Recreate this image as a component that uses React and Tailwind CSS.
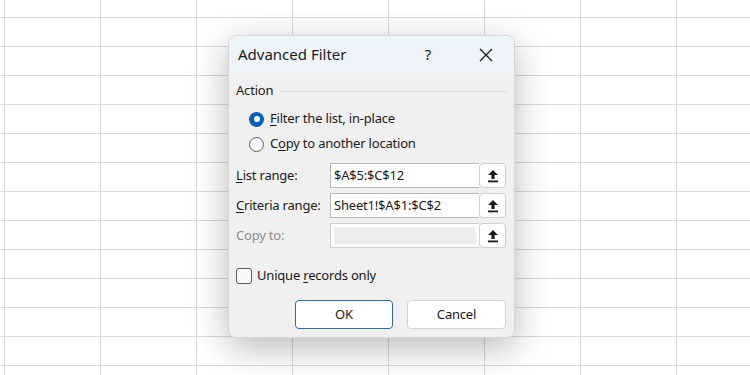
import React from "react";

const font = { fontFamily: '"Noto Sans", "Open Sans", sans-serif' };

function GridBackground() {
  const cols = 8;
  const rows = 13;
  const cells = [];
  for (let r = 0; r < rows + 1; r++) {
    for (let c = 0; c < cols + 1; c++) {
      cells.push(<div key={r + "-" + c} className="border-r border-b border-[#dadada]" />);
    }
  }
  return (
    <div className="grid grid-cols-[5px_repeat(8,96px)] grid-rows-[18px_repeat(13,29px)] w-[750px] h-[375px] overflow-hidden">
      {cells}
    </div>
  );
}

function UploadButton() {
  return (
    <div className="w-[27px] h-[25px] bg-white border border-[#cfcfcf] rounded-[4px] flex items-center justify-center">
      <svg width="12" height="14" viewBox="0 0 12 14">
        <path d="M6 1 L11 6 L7.6 6 L7.6 10 L4.4 10 L4.4 6 L1 6 Z" fill="#1a1a1a" />
        <rect x="1" y="11.5" width="10" height="1.8" fill="#1a1a1a" />
      </svg>
    </div>
  );
}

function RangeRow({ label, value, disabled }) {
  return (
    <div className="flex items-center h-[25px]">
      <div className={"w-[96px] " + (disabled ? "text-[#8c8c8c]" : "text-[#1b1b1b]")}>{label}</div>
      <div className="flex">
        {disabled ? (
          <div className="w-[149px] h-[25px] border border-[#cfcfcf] bg-white p-[3px] border-r-0">
            <div className="w-full h-full bg-[#ececec]" />
          </div>
        ) : (
          <div className="w-[149px] h-[25px] border border-[#b9b9b9] bg-white px-[3px] flex items-center text-[#1b1b1b] border-r-0">
            {value}
          </div>
        )}
        <UploadButton />
      </div>
    </div>
  );
}

export default function App() {
  return (
    <div className="relative w-[750px] h-[375px] bg-white overflow-hidden" style={font}>
      <GridBackground />
      <div className="absolute left-[228px] top-[35px] w-[287px] h-[303px] rounded-[8px] bg-[#f0f0f0] border border-[#d6d6d6] shadow-[0_10px_36px_rgba(0,0,0,0.28)] overflow-hidden flex flex-col text-[13px] tracking-[-0.2px]">
        <div className="h-[37px] bg-[#eef4f9] flex items-center pl-[9px] pr-[12px] shrink-0 tracking-normal">
          <div className="flex-1 text-[15px] text-[#1a1a1a]">Advanced Filter</div>
          <div className="w-[20px] text-center text-[15px] text-[#1a1a1a] mr-[41px]">?</div>
          <svg width="14" height="14" viewBox="0 0 14 14" className="mr-[9px]">
            <path d="M1 1 L13 13 M13 1 L1 13" stroke="#1a1a1a" strokeWidth="1.3" />
          </svg>
        </div>
        <div className="flex flex-col pl-[7px] pr-[8px]">
          <div className="flex items-center mt-[9px] h-[18px]">
            <span className="text-[#1b1b1b]">Action</span>
            <div className="flex-1 ml-[8px] h-px bg-[#d7d7d7]" />
          </div>
          <div className="flex flex-col pl-[13px] mt-[10px] gap-[7px]">
            <div className="flex items-center h-[18px] gap-[6px]">
              <div className="w-[15px] h-[15px] rounded-full bg-[#005fb8] flex items-center justify-center">
                <div className="w-[6px] h-[6px] rounded-full bg-white" />
              </div>
              <span className="text-[#1b1b1b]"><span className="underline underline-offset-2">F</span>ilter the list, in-place</span>
            </div>
            <div className="flex items-center h-[18px] gap-[6px]">
              <div className="w-[15px] h-[15px] rounded-full border border-[#5f5f5f] bg-[#f7f7f7]" />
              <span className="text-[#1b1b1b]">C<span className="underline underline-offset-2">o</span>py to another location</span>
            </div>
          </div>
          <div className="flex flex-col mt-[10px] gap-[5px]">
            <RangeRow label={<><span className="underline underline-offset-2">L</span>ist range:</>} value="$A$5:$C$12" />
            <RangeRow label={<><span className="underline underline-offset-2">C</span>riteria range:</>} value="Sheet1!$A$1:$C$2" />
            <RangeRow label="Copy to:" disabled />
          </div>
          <div className="flex items-center mt-[19px] h-[18px] gap-[5px]">
            <div className="w-[16px] h-[16px] rounded-[3px] border border-[#5f5f5f] bg-[#f7f7f7]" />
            <span className="text-[#1b1b1b]">Unique <span className="underline underline-offset-2">r</span>ecords only</span>
          </div>
          <div className="flex justify-end gap-[14px] mt-[15px]">
            <button className="w-[98px] h-[29px] bg-white border border-[#2b6ca8] rounded-[4px] text-[#1b1b1b]">OK</button>
            <button className="w-[99px] h-[29px] bg-white border border-[#d3d3d3] rounded-[4px] text-[#1b1b1b]">Cancel</button>
          </div>
        </div>
      </div>
    </div>
  );
}
